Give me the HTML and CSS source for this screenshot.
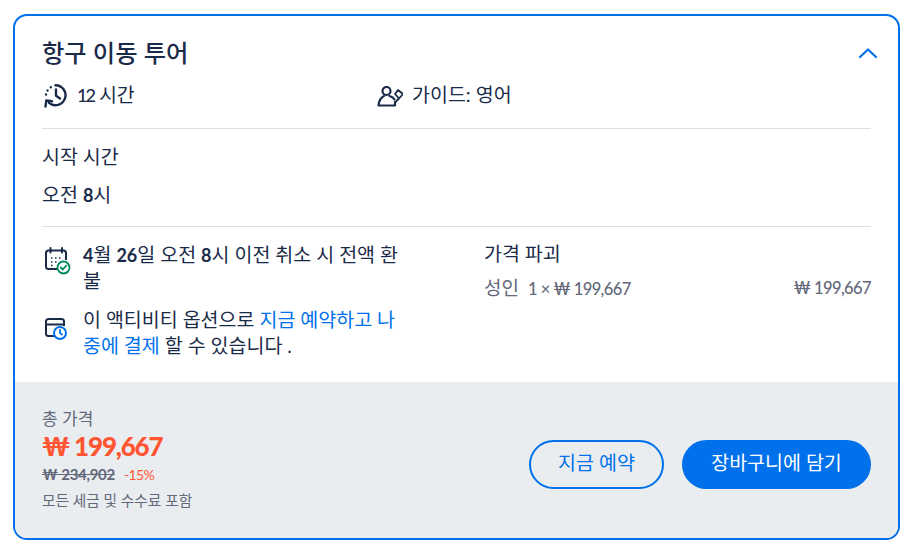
FILE: index.html
```html
<!DOCTYPE html>
<html lang="ko">
<head>
    <meta charset="UTF-8">
    <meta name="viewport" content="width=device-width, initial-scale=1.0">
    <title>항구 이동 투어</title>
    <link rel="stylesheet" href="styles.css">
</head>
<body>
    <section class="option-card">
        <div class="option-body">
            <div class="option-head">
                <h2 class="option-title">항구 이동 투어</h2>
                <svg class="chevron" width="20" height="12" viewBox="0 0 20 12" fill="none" stroke="#0071eb" stroke-width="2.2" stroke-linecap="round" stroke-linejoin="round"><path d="M2 10 10 2.500 18 10"/></svg>
            </div>

            <div class="option-meta">
                <div class="meta-item meta-duration">
                    <svg class="meta-icon icon-clock" width="24" height="24" viewBox="0 0 24 24" fill="none" stroke="#1a2b49" stroke-width="2.400" stroke-linecap="round" stroke-linejoin="round">
                        <path d="M11.500 1.200A10 10 0 1 1 5 18.800"/>
                        <path d="M12 5.500v6.300l4 2.700"/>
                        <path d="M1.500 22.500l.8-6 5.700.8"/>
                        <path d="M6.800 3.200h.01M3.500 6.500h.01M2 10.500h.01"/>
                    </svg>
                    <span><span class="num num-tight">12</span> 시간</span>
                </div>
                <div class="meta-item meta-guide">
                    <svg class="meta-icon" width="26" height="21" viewBox="0 0 26 21" fill="none" stroke="#1a2b49" stroke-width="2.200" stroke-linejoin="round" stroke-linecap="round">
                        <circle cx="9.500" cy="5" r="4"/>
                        <path d="M1.500 19.500c.5-5 2.500-8 5.500-9.500M1.500 19.500H18V16M12.500 10c2 .5 4 1.500 5 3.500"/>
                        <path d="M18 8l3-4 5 4-4 4.500zM22 12.500l-3.500 3.500" stroke-width="1.800"/>
                    </svg>
                    <span>가이드: 영어</span>
                </div>
            </div>

            <div class="start-time">
                <p class="start-label">시작 시간</p>
                <p class="start-value">오전 <span class="num">8</span>시</p>
            </div>

            <div class="option-details">
                <div class="policy-list">
                    <div class="policy-item">
                        <svg class="policy-icon" width="28" height="28" viewBox="0 0 28 28" fill="none">
                            <path d="M13 22H4.500A2.500 2.500 0 0 1 2 19.500V6A2.500 2.500 0 0 1 4.500 3.500h15A2.500 2.500 0 0 1 22 6V13" stroke="#1a2b49" stroke-width="2"/>
                            <path d="M6.500 1v4.500M18 1v4.500" stroke="#1a2b49" stroke-width="2" stroke-linecap="round"/>
                            <path d="M7 11h1.500M11 11h1.500M15 11h1.500M7 15h1.500M11 15h1.500M7 18.500h1.500" stroke="#1a2b49" stroke-width="1.600"/>
                            <circle cx="19.500" cy="20.500" r="6" fill="#fff" stroke="#008a5e" stroke-width="1.800"/>
                            <path d="M16.800 20.500l2 2 3.500-3.800" stroke="#008a5e" stroke-width="1.800" stroke-linecap="round" stroke-linejoin="round"/>
                        </svg>
                        <p><span class="num">4</span>월 <span class="num">26</span>일 오전 <span class="num">8</span>시 이전 취소 시 전액 환불</p>
                    </div>
                    <div class="policy-item">
                        <svg class="policy-icon" width="28" height="28" viewBox="0 0 28 28" fill="none">
                            <path d="M12 24H4.500A2.500 2.500 0 0 1 2 21.500V9.500A2.500 2.500 0 0 1 4.500 7h13A2.500 2.500 0 0 1 20 9.500V14" stroke="#1a2b49" stroke-width="2"/>
                            <path d="M2 12.500h18" stroke="#1a2b49" stroke-width="2"/>
                            <circle cx="16" cy="21" r="6" fill="#fff" stroke="#0071eb" stroke-width="2"/>
                            <path d="M16 18v3.300l2 1.200" stroke="#0071eb" stroke-width="1.800" stroke-linecap="round" stroke-linejoin="round"/>
                        </svg>
                        <p>이 액티비티 옵션으로 <a class="text-link" href="#">지금 예약하고 나중에 결제</a> 할 수 있습니다 .</p>
                    </div>
                </div>

                <div class="price-breakdown">
                    <p class="breakdown-title">가격 파괴</p>
                    <div class="breakdown-row">
                        <span><span class="breakdown-who">성인</span>&nbsp; 1 × ₩ 199,667</span>
                        <span>₩ 199,667</span>
                    </div>
                </div>
            </div>
        </div>

        <div class="option-footer">
            <div class="total">
                <p class="total-label">총 가격</p>
                <p class="total-price">₩ 199,667</p>
                <p class="total-old"><s>₩ 234,902</s><span class="total-off">-15%</span></p>
                <p class="total-note">모든 세금 및 수수료 포함</p>
            </div>
            <div class="footer-actions">
                <button class="btn btn-outline">지금 예약</button>
                <button class="btn btn-solid">장바구니에 담기</button>
            </div>
        </div>
    </section>
</body>
</html>
```

FILE: styles.css
```css
* {
    margin: 0;
    padding: 0;
    box-sizing: border-box;
}

body {
    font-family: 'Lato', 'Noto Sans CJK KR', sans-serif;
    color: #1a2b49;
    background: #fff;
    padding: 14px 15px 13px 13px;
}

.option-card {
    height: 526px;
    border: 2px solid #0071eb;
    border-radius: 14px;
    overflow: hidden;
    display: flex;
    flex-direction: column;
}

.option-body {
    flex: 1;
    padding: 19px 27px 0;
}

.option-head {
    display: flex;
    justify-content: space-between;
    align-items: center;
    height: 36px;
}

.option-title {
    font-size: 24.3px;
    font-weight: 500;
    line-height: 36px;
}

.chevron {
    margin-right: -7px;
}

.option-meta {
    display: flex;
    align-items: center;
    height: 58px;
    padding-bottom: 13px;
    font-size: 19.5px;
    border-bottom: 1px solid #dcdfe4;
}

.meta-item {
    display: flex;
    align-items: center;
    gap: 9px;
}

.meta-duration {
    width: 335px;
}

.meta-icon {
    margin-top: 6px;
}

.icon-clock {
    margin-left: 2px;
}

.start-time {
    padding: 15px 0 18px;
    font-size: 19.5px;
    border-bottom: 1px solid #dcdfe4;
}

.start-label {
    line-height: 26px;
    margin-bottom: 12px;
}

.start-value {
    line-height: 26px;
}

.option-details {
    display: flex;
    padding-top: 14px;
    font-size: 19.5px;
}

.policy-list {
    width: 359px;
    margin-top: 1px;
    margin-right: 83px;
}

.policy-item {
    display: flex;
    gap: 11px;
    line-height: 26px;
    margin-bottom: 13px;
}

.policy-icon {
    flex: none;
    margin-top: 5px;
    margin-left: 2px;
}

.num {
    font-size: 18px;
    font-weight: 700;
}

.num-tight {
    font-weight: 500;
    letter-spacing: -2px;
}

.text-link {
    color: #0071eb;
    text-decoration: none;
}

.price-breakdown {
    flex: 1;
}

.breakdown-title {
    line-height: 26px;
    margin-bottom: 8px;
}

.breakdown-row {
    display: flex;
    justify-content: space-between;
    color: #63687a;
    font-weight: 500;
    font-size: 16.5px;
    letter-spacing: -0.6px;
    line-height: 26px;
}

.breakdown-who {
    font-size: 19px;
    font-weight: 400;
    letter-spacing: 0;
    margin-right: 2px;
}

.option-footer {
    height: 156px;
    background: #e9edf0;
    padding: 26px 27px 0;
    display: flex;
    justify-content: space-between;
}

.total-label {
    font-size: 17px;
    line-height: 22px;
    color: #63687a;
}

.total-price {
    font-size: 26px;
    font-weight: 900;
    letter-spacing: -1.2px;
    line-height: 32px;
    color: #ff5533;
}

.total-old {
    font-size: 15px;
    font-weight: 700;
    letter-spacing: -0.3px;
    line-height: 24px;
    color: #63687a;
}

.total-off {
    color: #ff5533;
    font-size: 14px;
    font-weight: 400;
    letter-spacing: -0.6px;
    margin-left: 9px;
}

.total-note {
    font-size: 14.7px;
    line-height: 26px;
    color: #63687a;
}

.footer-actions {
    display: flex;
    gap: 18px;
    padding-top: 32px;
}

.btn {
    height: 49px;
    padding-bottom: 7px;
    border-radius: 25px;
    font-family: inherit;
    font-size: 19.5px;
    cursor: pointer;
}

.btn-outline {
    width: 135px;
    background: none;
    border: 2px solid #0071eb;
    color: #0071eb;
}

.btn-solid {
    width: 189px;
    background: #0071eb;
    border: none;
    color: #fff;
}
```
